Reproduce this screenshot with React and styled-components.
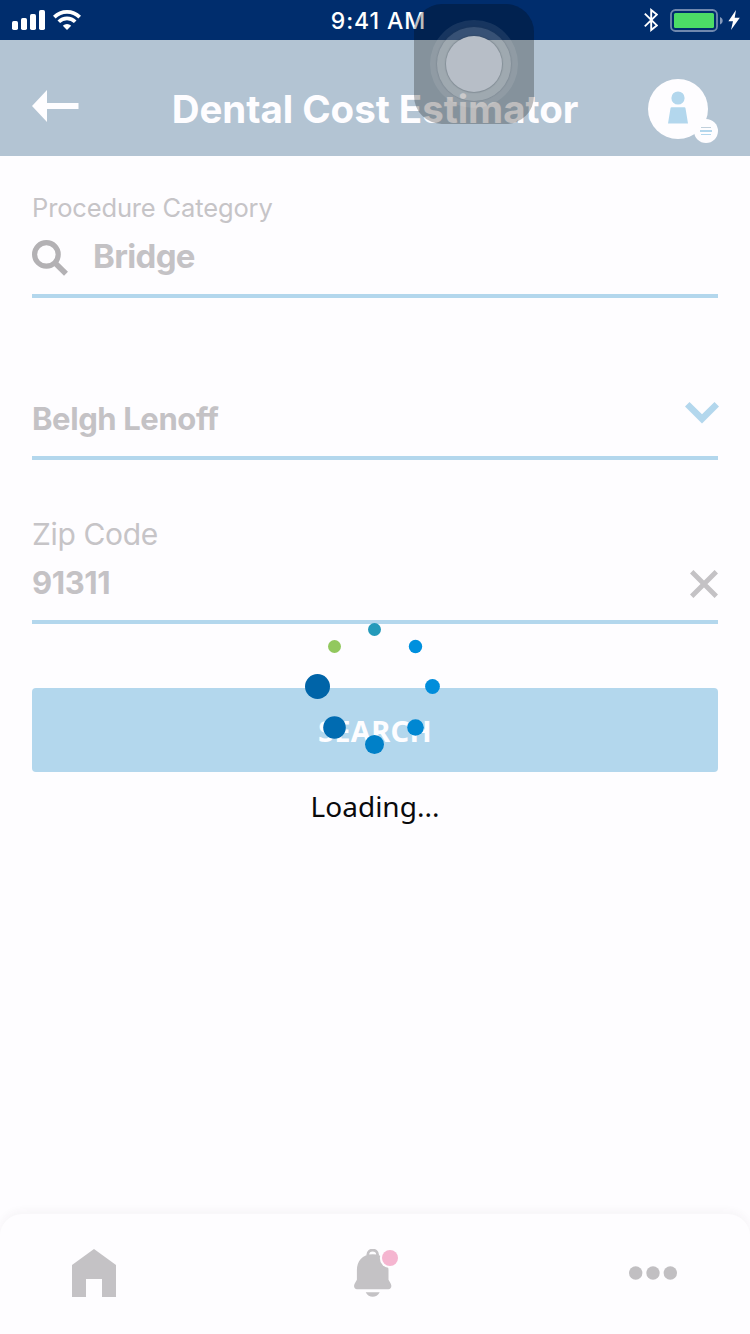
import React from "react";
import styled, { createGlobalStyle } from "styled-components";

const C = {
  navy: "#002d6d",
  header: "#b3c4d3",
  page: "#fefdff",
  blue: "#b3d7ed",
  gray: "#c4c2c5",
  white: "#fefdff",
};

const Global = createGlobalStyle`
  *, *::before, *::after { box-sizing: border-box; }
  body { margin: 0; background: ${C.page}; }
  svg { display: block; flex: none; }
`;

const Screen = styled.div`
  position: relative;
  display: flex;
  flex-direction: column;
  width: 750px;
  height: 1334px;
  overflow: hidden;
  background: ${C.page};
  font-family: Inter, "Liberation Sans", sans-serif;
`;

const StatusBar = styled.div`
  display: grid;
  grid-template-columns: 1fr auto 1fr;
  align-items: center;
  height: 40px;
  padding: 0 10px 0 12px;
  background: ${C.navy};
  color: #fff;
`;

const StatusGroup = styled.div`
  display: flex;
  align-items: center;
  justify-content: ${(p) => (p.$end ? "flex-end" : "flex-start")};
  gap: 8px;
`;

const Time = styled.span`
  font-size: 23px;
  line-height: 38px;
  font-weight: 500;
  letter-spacing: 0.95px;
  padding: 2px 0 0 5px;
`;

const Header = styled.header`
  display: flex;
  align-items: center;
  justify-content: space-between;
  height: 116px;
  padding: 22px 32px 0;
  background: ${C.header};
`;

const BackButton = styled.button`
  display: flex;
  width: 70px;
  padding: 0 0 6px;
  border: 0;
  background: none;
`;

const Title = styled.h1`
  margin: 0;
  font-size: 38.5px;
  line-height: 48px;
  font-weight: 650;
  letter-spacing: ${(p) => p.$tracking}px;
  white-space: nowrap;
  color: ${C.white};
`;

const Profile = styled.button`
  width: 70px;
  padding: 4px 0 0;
  border: 0;
  background: none;
`;

const Form = styled.main`
  display: flex;
  flex-direction: column;
  padding: 0 32px;
`;

const Field = styled.div`
  display: flex;
  flex-direction: column;
  justify-content: flex-end;
  height: ${(p) => p.$height}px;
  padding-bottom: ${(p) => p.$bottom}px;
  border-bottom: 4px solid ${C.blue};
`;

const Label = styled.label`
  font-size: ${(p) => p.$size}px;
  line-height: 36px;
  font-weight: 400;
  letter-spacing: ${(p) => p.$tracking}px;
  color: #c6c4c7;
`;

const ValueRow = styled.div`
  display: flex;
  align-items: center;
  gap: 25px;
  height: ${(p) => p.$height}px;
`;

const Value = styled.span`
  flex: 1;
  font-size: ${(p) => p.$size}px;
  line-height: ${(p) => p.$height}px;
  font-weight: ${(p) => p.$weight || 650};
  letter-spacing: ${(p) => p.$tracking || 0}px;
  color: ${C.gray};
`;

const IconSlot = styled.span`
  display: flex;
  padding-top: ${(p) => p.$top || 0}px;
  padding-bottom: ${(p) => p.$bottom || 0}px;
  margin-right: ${(p) => p.$right || 0}px;
`;

const SearchButton = styled.button`
  height: 84px;
  margin-top: 64px;
  padding: 2px 0 0;
  border: 0;
  border-radius: 4px;
  background: ${C.blue};
  color: ${C.white};
  font-family: "Noto Sans", sans-serif;
  font-size: 29px;
  line-height: 82px;
  font-weight: 700;
  letter-spacing: 0.3px;
`;

const NavBar = styled.nav`
  display: flex;
  align-items: flex-start;
  justify-content: space-between;
  height: 120px;
  margin-top: auto;
  padding: 35px 73px 0 72px;
  border-radius: 22px 22px 0 0;
  background: ${C.page};
  box-shadow: 0 -3px 8px rgba(60, 50, 70, 0.045);
`;

const NavItem = styled.button`
  display: flex;
  align-items: center;
  height: 48px;
  padding: 0 0 0 ${(p) => p.$inset || 0}px;
  border: 0;
  background: none;
`;

const Loader = styled.div`
  position: absolute;
  left: 0;
  top: 616px;
  width: 100%;
  display: flex;
  flex-direction: column;
  align-items: center;
`;

const LoaderText = styled.div`
  margin-top: 24px;
  font-family: "Noto Sans", sans-serif;
  font-size: 28px;
  line-height: 38px;
  color: #0a0a0c;
`;

const AssistiveTouch = styled.div`
  position: absolute;
  left: 414px;
  top: 4px;
  display: flex;
  align-items: center;
  justify-content: center;
  width: 120px;
  height: 120px;
  border-radius: 28px;
  background: rgba(4, 2, 0, 0.26);
`;

const Ring = styled.div`
  display: flex;
  align-items: center;
  justify-content: center;
  width: ${(p) => p.$size}px;
  height: ${(p) => p.$size}px;
  flex: none;
  border-radius: 50%;
  background: ${(p) => p.$fill};
  box-shadow: 0 0 1px 1px rgba(40, 55, 70, ${(p) => p.$edge || 0});
`;

const dots = [
  [374.5, 629.5, 6.5, "#249aba"],
  [415.5, 646.5, 6.7, "#0090de"],
  [432.5, 686.5, 7.4, "#008ddb"],
  [415.5, 727.5, 8.3, "#0087d2"],
  [374.5, 744.5, 9.5, "#0080c8"],
  [334.5, 727.5, 11.3, "#006bb1"],
  [317.5, 686.5, 12.5, "#0064a8"],
  [334.5, 646.5, 6.5, "#92c85e"],
];

const Signal = () => (
  <svg width="33" height="20" viewBox="0 0 33 20" fill="#fff">
    <rect y="11" width="6" height="9" rx="1.7" />
    <rect x="9" y="8" width="6" height="12" rx="1.7" />
    <rect x="18" y="4" width="6" height="16" rx="1.7" />
    <rect x="27" width="6" height="20" rx="1.7" />
  </svg>
);

const Wifi = () => (
  <svg width="28" height="20" viewBox="0 0 28 20">
    <g fill="none" stroke="#fff" strokeWidth="3.7">
      <path d="M1.3 7.1a18 18 0 0 1 25.4 0" />
      <path d="M5.8 11.8a11.7 11.7 0 0 1 16.4 0" />
    </g>
    <path d="M14 20l-4.2-4.2a6 6 0 0 1 8.4 0z" fill="#fff" />
  </svg>
);

const Bluetooth = () => (
  <svg width="14" height="24" viewBox="0 0 14 24" fill="none" stroke="#fff" strokeWidth="1.9">
    <path d="M.8 5.6l12 11.8L7.2 22V2l5.6 4.6-12 11.8" />
  </svg>
);

const Battery = () => (
  <svg width="53" height="23" viewBox="0 0 53 23">
    <rect x="1" y="1" width="46" height="21" rx="4.5" fill="none" stroke="#7088ae" strokeWidth="1.8" />
    <rect x="4" y="4" width="40" height="15" rx="1.5" fill="#4cdc66" />
    <path d="M50 8c3.6 1.4 3.6 6 0 7.4z" fill="#8599ba" />
  </svg>
);

const Bolt = () => (
  <svg width="12" height="20" viewBox="0 0 12 20" fill="#fff">
    <path d="M8 0L.4 11.3H5L3 20 11.8 7.8H6.7z" />
  </svg>
);

const BackArrow = () => (
  <svg width="47" height="32" viewBox="0 0 47 32" fill={C.white}>
    <path d="M0 16L15 0v13h31.5v6H15v13z" />
  </svg>
);

const Avatar = () => (
  <svg width="70" height="64" viewBox="0 0 70 64">
    <circle cx="30" cy="30" r="30" fill={C.white} />
    <circle cx="30" cy="19" r="6.6" fill={C.blue} />
    <path d="M23.5 28.3h13q.8 0 1 .9L40 44.5H20l2.5-15.3q.2-.9 1-.9z" fill={C.blue} />
    <circle cx="58" cy="52" r="12" fill={C.white} />
    <path d="M53 48.5h10" stroke="#c0cfdb" strokeWidth="1" />
    <path d="M52 52h12" stroke={C.blue} strokeWidth="2" />
    <path d="M53 55.5h10" stroke={C.blue} strokeWidth="1" />
  </svg>
);

const Magnifier = () => (
  <svg width="36" height="36" viewBox="0 0 36 36" fill="none" stroke="#b3b1b4">
    <circle cx="14.4" cy="14.4" r="11.8" strokeWidth="5.2" />
    <path d="M22.6 22.6L34 33.7" strokeWidth="5.6" />
  </svg>
);

const Chevron = () => (
  <svg width="34" height="22" viewBox="0 0 34 22" fill={C.blue}>
    <path d="M0 4.4L4.5 0 17 12.2 29.5 0 34 4.4 17 21.5z" />
  </svg>
);

const Clear = () => (
  <svg width="28" height="28" viewBox="0 0 28 28" stroke={C.gray} strokeWidth="4.9">
    <path d="M1.7 1.7l24.6 24.6M26.3 1.7L1.7 26.3" />
  </svg>
);

const Home = () => (
  <svg width="44" height="48" viewBox="0 0 44 48" fill={C.gray}>
    <path d="M22 0l22 16v32H30V30H14v18H0V16z" />
  </svg>
);

const Bell = () => (
  <svg width="45" height="48" viewBox="0 0 45 48">
    <path d="M13.8 6.5V5.8c0-6.3 9.8-6.3 9.8 0v.7" fill="none" stroke={C.gray} strokeWidth="2.8" />
    <path d="M18.7 5.2C8 5.2 2.9 12.5 2.9 21v9.8L.9 34.2c-1.8 3-.6 6 2.1 6h31.4c2.7 0 3.9-3 2.1-6l-2-3.4V21c0-8.5-5.1-15.8-15.8-15.8z" fill={C.gray} />
    <path d="M11.7 43.2h14c-3 6.2-11 6.2-14 0z" fill={C.gray} />
    <circle cx="36" cy="9" r="10.2" fill={C.page} />
    <circle cx="36" cy="9" r="8" fill="#f5b5d0" />
  </svg>
);

const More = () => (
  <svg width="48" height="14" viewBox="0 0 48 14" fill="#c1bfc2">
    <circle cx="6.7" cy="7" r="6.7" />
    <circle cx="24" cy="7" r="6.7" />
    <circle cx="41.3" cy="7" r="6.7" />
  </svg>
);

export default function App() {
  return (
    <Screen>
      <Global />
      <StatusBar>
        <StatusGroup><Signal /><Wifi /></StatusGroup>
        <Time>9:41 AM</Time>
        <StatusGroup $end>
          <IconSlot $right={4}><Bluetooth /></IconSlot>
          <IconSlot $right={-3}><Battery /></IconSlot>
          <Bolt />
        </StatusGroup>
      </StatusBar>
      <Header>
        <BackButton aria-label="Back"><BackArrow /></BackButton>
        <Title $tracking={-0.05}>Dental Cost Estimator</Title>
        <Profile aria-label="Profile"><Avatar /></Profile>
      </Header>
      <Form>
        <Field $height={142} $bottom={8}>
          <Label $size={25.5} $tracking={-0.15}>Procedure Category</Label>
          <ValueRow $height={60}>
            <IconSlot $top={3}><Magnifier /></IconSlot>
            <Value $size={33} $height={60} $tracking={-0.65}>Bridge</Value>
          </ValueRow>
        </Field>
        <Field $height={162} $bottom={7}>
          <ValueRow $height={61}>
            <Value $size={31} $height={61} $tracking={-0.4}>Belgh Lenoff</Value>
            <IconSlot $bottom={12} $right={-1}><Chevron /></IconSlot>
          </ValueRow>
        </Field>
        <Field $height={164} $bottom={6}>
          <Label $size={30} $tracking={-0.35}>Zip Code</Label>
          <ValueRow $height={62}>
            <Value $size={31} $height={62} $weight={700} $tracking={-0.4}>91311</Value>
            <IconSlot $top={2}><Clear /></IconSlot>
          </ValueRow>
        </Field>
        <SearchButton>SEARCH</SearchButton>
      </Form>
      <NavBar>
        <NavItem aria-label="Home"><Home /></NavItem>
        <NavItem aria-label="Notifications" $inset={7}><Bell /></NavItem>
        <NavItem aria-label="More"><More /></NavItem>
      </NavBar>
      <Loader>
        <svg width="150" height="147" viewBox="300 616 150 147">
          {dots.map(([x, y, r, fill]) => (
            <circle key={`${x}-${y}`} cx={x} cy={y} r={r} fill={fill} />
          ))}
        </svg>
        <LoaderText>Loading...</LoaderText>
      </Loader>
      <AssistiveTouch>
        <Ring $size={88} $fill="rgba(255,255,255,.09)">
          <Ring $size={74} $fill="rgba(255,255,255,.14)" $edge={0.12}>
            <Ring $size={56} $fill="#b7bec7" $edge={0.22} />
          </Ring>
        </Ring>
      </AssistiveTouch>
    </Screen>
  );
}
